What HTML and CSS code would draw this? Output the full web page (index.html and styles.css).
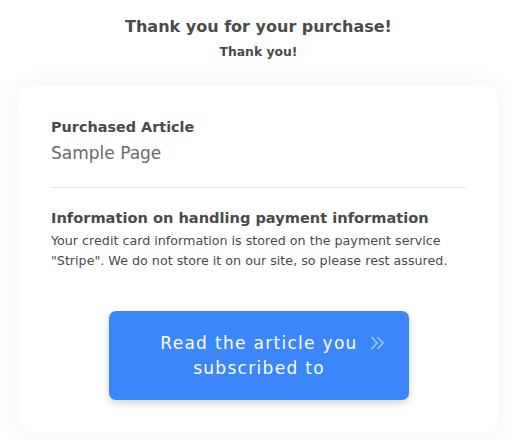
FILE: index.html
```html
<!DOCTYPE html>
<html>
<head>
<meta charset="utf-8">
<link rel="stylesheet" href="styles.css">
</head>
<body>
<div class="page">
  <header class="head">
    <h1 class="title">Thank you for your purchase!</h1>
    <p class="subtitle">Thank you!</p>
  </header>
  <main class="card">
    <section class="block">
      <h2 class="label">Purchased Article</h2>
      <p class="article">Sample Page</p>
    </section>
    <hr class="divider">
    <section class="block">
      <h2 class="label label-lg">Information on handling payment information</h2>
      <p class="note">Your credit card information is stored on the payment service "Stripe". We do not store it on our site, so please rest assured.</p>
    </section>
    <div class="actions">
      <a class="btn" href="#"><span class="btn-text">Read the article you subscribed to</span><svg class="chev" width="15" height="14" viewBox="0 0 15 14"><path d="M1.5 1 L7 7 L1.5 13 M7.5 1 L13 7 L7.5 13" fill="none" stroke="#a9c8fb" stroke-width="1.5"/></svg></a>
    </div>
  </main>
</div>
</body>
</html>
```

FILE: styles.css
```css
* { box-sizing: border-box; }
html, body { margin: 0; padding: 0; background: #fff; }
body {
  font-family: "DejaVu Sans", Verdana, sans-serif;
  color: #4a4a4a;
}
.page {
  width: 516px;
  height: 444px;
  padding: 16px 18px 0 19px;
  overflow: hidden;
}
.head { text-align: center; }
.title {
  margin: 0;
  font-size: 16px;
  line-height: 22px;
  font-weight: bold;
  color: #4a4a4a;
}
.subtitle {
  margin: 6px 0 0;
  font-size: 12.4px;
  line-height: 16px;
  font-weight: bold;
  color: #4a4a4a;
}
.card {
  margin-top: 25px;
  background: #fff;
  border-radius: 12px;
  box-shadow: 0 0 22px rgba(120, 150, 230, 0.10);
  padding: 33px 32px 31px;
  height: 347px;
}
.label {
  margin: 0;
  font-size: 14.4px;
  line-height: 18px;
  font-weight: bold;
  color: #4a4a4a;
}
.label-lg { font-size: 14.6px; }
.article {
  margin: 6px 0 0;
  font-size: 17px;
  line-height: 22px;
  color: #6a6a6a;
}
.divider {
  border: 0;
  border-top: 1px solid #e5e5e5;
  margin: 23px 0 21px;
}
.note {
  margin: 4px 0 0;
  font-size: 12.7px;
  line-height: 20px;
  color: #4a4a4a;
}
.actions {
  display: flex;
  justify-content: center;
  margin-top: 40px;
}
.btn {
  display: flex;
  align-items: center;
  justify-content: flex-start;
  width: 300px;
  height: 89px;
  padding: 0 24px 0 50px;
  background: #3b86fb;
  border-radius: 7px;
  box-shadow: 0 3px 8px rgba(0, 0, 0, 0.18);
  color: #fff;
  text-decoration: none;
}
.btn-text {
  text-align: center;
  font-size: 17px;
  line-height: 25px;
  letter-spacing: 1.3px;
}
.chev {
  flex: none;
  margin-left: 10px;
  margin-top: -25px;
}
```
